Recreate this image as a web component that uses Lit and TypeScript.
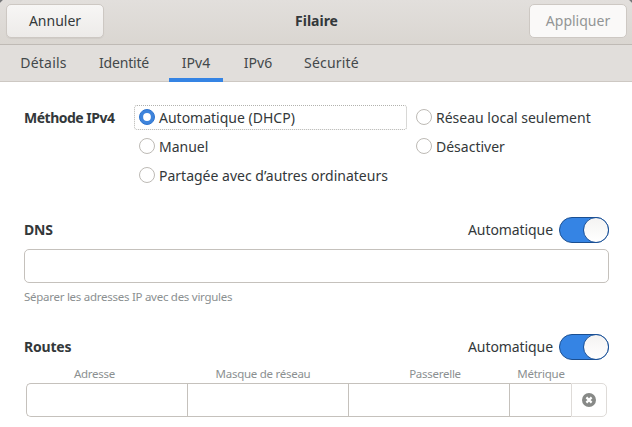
import { LitElement, html, css, svg } from "lit";
import { customElement, property } from "lit/decorators.js";

@customElement("radio-option")
class RadioOption extends LitElement {
  @property() label = "";
  @property({ type: Boolean }) checked = false;

  static styles = css`
    :host { display: flex; align-items: center; box-sizing: border-box; height: 25px; padding-left: 5px; }
    .dot { width: 16px; height: 16px; margin: 0 4px 1px 0; flex: none; }
    .text { white-space: nowrap; }
  `;

  render() {
    const mark = this.checked
      ? svg`<circle cx="8" cy="8" r="7.5" fill="#3e84dc" stroke="#2f75cf"/><circle cx="8" cy="8" r="3.9" fill="#fff"/>`
      : svg`<circle cx="8" cy="8" r="7.5" fill="#fff" stroke="#bdbab5"/>`;
    return html`<svg class="dot" viewBox="0 0 16 16">${mark}</svg><span class="text">${this.label}</span>`;
  }
}

@customElement("toggle-switch")
class ToggleSwitch extends LitElement {
  static styles = css`
    :host { display: flex; justify-content: flex-end; box-sizing: border-box; width: 50px; height: 26px; border: 1px solid #1b4f91; border-radius: 13px; background: #3584e4; }
    .knob { box-sizing: border-box; width: 26px; height: 26px; margin: -1px; border: 1px solid #1b5299; border-radius: 50%; background: linear-gradient(#f4f3f2, #fff); }
  `;

  render() {
    return html`<span class="knob"></span>`;
  }
}

@customElement("app-root")
class AppRoot extends LitElement {
  static styles = css`
    :host { display: block; width: 632px; height: 427px; overflow: hidden; background: #fff; color: #33383a; font: 14px/20px "Noto Sans", "Open Sans", sans-serif; }
    .bar { display: grid; grid-template-columns: 98px 1fr 98px; align-items: center; box-sizing: border-box; height: 45px; padding: 0 5px 3px 6px; background: linear-gradient(135deg, #77787a 1.5px, transparent 2.5px), linear-gradient(225deg, #77787a 1.5px, transparent 2.5px), linear-gradient(#e2dfdc, #dad6d1); border-bottom: 1px solid #bfbab5; }
    .btn { box-sizing: border-box; height: 34px; border: 1px solid #cdc8c3; border-radius: 5px; text-align: center; line-height: 32px; background: linear-gradient(#f7f6f5, #edebe9); box-shadow: 0 1px 1px #0000000d; }
    .off { background: #faf9f8; color: #929595; box-shadow: none; }
    .title, .head { font-weight: 700; }
    .title { text-align: center; }
    .head { letter-spacing: -0.5px; }
    .short { letter-spacing: -0.2px; }
    .tabs { display: flex; gap: 8px; box-sizing: border-box; height: 37px; padding-left: 8px; background: #e1dedb; border-bottom: 1px solid #cdc8c3; }
    .tab { box-sizing: border-box; height: 37px; text-align: center; line-height: 36px; color: #43484a; }
    .active { border-bottom: 4px solid #3584e4; }
    .t1 { width: 71px; letter-spacing: 0.2px; }
    .t2 { width: 74px; letter-spacing: -0.2px; }
    .t3, .t4 { width: 54px; }
    .t3 { letter-spacing: 0.1px; }
    .t5 { width: 79px; margin-left: -1px; letter-spacing: 0.2px; }
    .page { padding: 23px 23px 0 24px; }
    .method { display: grid; grid-template-columns: 110px 273px 1fr; grid-auto-rows: 25px; row-gap: 4px; align-items: center; }
    .method .second { margin-left: 4px; }
    .focus { border: 1px dotted #b2b2ae; border-radius: 3px; padding-left: 4px; }
    .wide { grid-column: 2 / 4; }
    .c1 { grid-column: 2; }
    .row { display: flex; align-items: center; height: 26px; }
    .dns, .routes { margin-top: 29px; }
    .state { margin-left: auto; margin-right: 6px; letter-spacing: -0.08px; }
    .entry { box-sizing: border-box; height: 34px; margin-top: 6px; border: 1px solid #c5c1bc; border-radius: 5px; }
    .hint, .names { height: 16px; margin-top: 6px; font-size: 11.5px; line-height: 16px; letter-spacing: -0.27px; color: #8b9091; }
    .cols { display: grid; grid-template-columns: 161px 161px 161px 62px 36px; margin-left: 2px; width: 581px; }
    .names { text-align: center; }
    .n1 { padding-right: 24px; } .n2 { padding-right: 9px; } .n3 { padding-left: 13px; } .n4 { padding-left: 2px; }
    .cells { height: 34px; margin-top: 1px; }
    .cell { box-sizing: border-box; border: 1px solid #c5c1bc; border-right: 0; }
    .first { border-radius: 5px 0 0 5px; }
    .del { display: flex; align-items: center; justify-content: center; box-sizing: border-box; border: 1px solid #dedbd8; border-radius: 0 5px 5px 0; }
  `;

  render() {
    const cross = svg`<circle cx="7" cy="7" r="7" fill="#878987"/><path d="M4.4 4.4L9.6 9.6M9.6 4.4L4.4 9.6" stroke="#fff" stroke-width="2.2"/>`;
    return html`
      <header class="bar">
        <div class="btn">Annuler</div>
        <div class="title">Filaire</div>
        <div class="btn off">Appliquer</div>
      </header>
      <nav class="tabs">
        <div class="tab t1">Détails</div>
        <div class="tab t2">Identité</div>
        <div class="tab t3 active">IPv4</div>
        <div class="tab t4">IPv6</div>
        <div class="tab t5">Sécurité</div>
      </nav>
      <main class="page">
        <section class="method">
          <span class="head">Méthode IPv4</span>
          <radio-option class="focus" label="Automatique (DHCP)" checked></radio-option>
          <radio-option class="second" label="Réseau local seulement"></radio-option>
          <radio-option class="c1" label="Manuel"></radio-option>
          <radio-option class="second" label="Désactiver"></radio-option>
          <radio-option class="wide" label="Partagée avec d’autres ordinateurs"></radio-option>
        </section>
        <section class="dns">
          <div class="row"><span class="head short">DNS</span><span class="state">Automatique</span><toggle-switch></toggle-switch></div>
          <div class="entry"></div>
          <div class="hint">Séparer les adresses IP avec des virgules</div>
        </section>
        <section class="routes">
          <div class="row"><span class="head short">Routes</span><span class="state">Automatique</span><toggle-switch></toggle-switch></div>
          <div class="cols names"><span class="n1">Adresse</span><span class="n2">Masque de réseau</span><span class="n3">Passerelle</span><span class="n4">Métrique</span></div>
          <div class="cols cells">
            <div class="cell first"></div><div class="cell"></div><div class="cell"></div><div class="cell"></div>
            <div class="del"><svg width="14" height="14" viewBox="0 0 14 14">${cross}</svg></div>
          </div>
        </section>
      </main>`;
  }
}
